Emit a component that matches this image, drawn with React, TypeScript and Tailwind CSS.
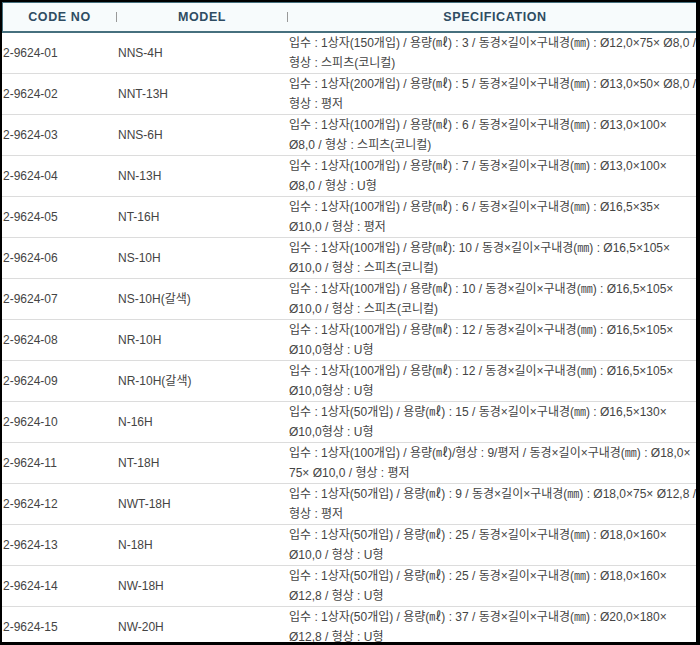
import React from "react";

const rows: [string, string, string, string][] = [
  ["2-9624-01", "NNS-4H", "입수 : 1상자(150개입) / 용량(㎖) : 3 / 동경×길이×구내경(㎜) : Ø12,0×75× Ø8,0 /", "형상 : 스피츠(코니컬)"],
  ["2-9624-02", "NNT-13H", "입수 : 1상자(200개입) / 용량(㎖) : 5 / 동경×길이×구내경(㎜) : Ø13,0×50× Ø8,0 /", "형상 : 평저"],
  ["2-9624-03", "NNS-6H", "입수 : 1상자(100개입) / 용량(㎖) : 6 / 동경×길이×구내경(㎜) : Ø13,0×100×", "Ø8,0 / 형상 : 스피츠(코니컬)"],
  ["2-9624-04", "NN-13H", "입수 : 1상자(100개입) / 용량(㎖) : 7 / 동경×길이×구내경(㎜) : Ø13,0×100×", "Ø8,0 / 형상 : U형"],
  ["2-9624-05", "NT-16H", "입수 : 1상자(100개입) / 용량(㎖) : 6 / 동경×길이×구내경(㎜) : Ø16,5×35×", "Ø10,0 / 형상 : 평저"],
  ["2-9624-06", "NS-10H", "입수 : 1상자(100개입) / 용량(㎖): 10 / 동경×길이×구내경(㎜) : Ø16,5×105×", "Ø10,0 / 형상 : 스피츠(코니컬)"],
  ["2-9624-07", "NS-10H(갈색)", "입수 : 1상자(100개입) / 용량(㎖) : 10 / 동경×길이×구내경(㎜) : Ø16,5×105×", "Ø10,0 / 형상 : 스피츠(코니컬)"],
  ["2-9624-08", "NR-10H", "입수 : 1상자(100개입) / 용량(㎖) : 12 / 동경×길이×구내경(㎜) : Ø16,5×105×", "Ø10,0형상 : U형"],
  ["2-9624-09", "NR-10H(갈색)", "입수 : 1상자(100개입) / 용량(㎖) : 12 / 동경×길이×구내경(㎜) : Ø16,5×105×", "Ø10,0형상 : U형"],
  ["2-9624-10", "N-16H", "입수 : 1상자(50개입) / 용량(㎖) : 15 / 동경×길이×구내경(㎜) : Ø16,5×130×", "Ø10,0형상 : U형"],
  ["2-9624-11", "NT-18H", "입수 : 1상자(100개입) / 용량(㎖)/형상 : 9/평저 / 동경×길이×구내경(㎜) : Ø18,0×", "75× Ø10,0 / 형상 : 평저"],
  ["2-9624-12", "NWT-18H", "입수 : 1상자(50개입) / 용량(㎖) : 9 / 동경×길이×구내경(㎜) : Ø18,0×75× Ø12,8 /", "형상 : 평저"],
  ["2-9624-13", "N-18H", "입수 : 1상자(50개입) / 용량(㎖) : 25 / 동경×길이×구내경(㎜) : Ø18,0×160×", "Ø10,0 / 형상 : U형"],
  ["2-9624-14", "NW-18H", "입수 : 1상자(50개입) / 용량(㎖) : 25 / 동경×길이×구내경(㎜) : Ø18,0×160×", "Ø12,8 / 형상 : U형"],
  ["2-9624-15", "NW-20H", "입수 : 1상자(50개입) / 용량(㎖) : 37 / 동경×길이×구내경(㎜) : Ø20,0×180×", "Ø12,8 / 형상 : U형"],
];

export default function App() {
  return (
    <div
      className="w-[700px] h-[645px] overflow-hidden bg-white border-black border-t-2 border-l-2 border-r-4 border-b-[3px] box-border"
      style={{ fontFamily: '"Liberation Sans", "Noto Sans CJK KR", sans-serif' }}
    >
      <div className="w-[720px]">
        <div className="flex h-[31px] items-center bg-[#f7fbfc] border-t border-l border-[#46707e] border-b-2 text-[12.5px] font-bold text-[#2e4c62] tracking-[0.6px]">
          <div className="w-[113px] text-center">CODE NO</div>
          <div className="w-0 h-[10px] border-l border-[#999]" />
          <div className="w-[170px] text-center">MODEL</div>
          <div className="w-0 h-[10px] border-l border-[#999]" />
          <div className="w-[414px] text-center">SPECIFICATION</div>
        </div>
        {rows.map(([code, model, l1, l2]) => (
          <div key={code} className="flex h-[41px] border-b border-[#dcdcdc] text-[12px] text-[#444]">
            <div className="w-[113px] pl-px flex items-center whitespace-nowrap">{code}</div>
            <div className="w-[172px] pl-[3px] flex items-center whitespace-nowrap">{model}</div>
            <div className="flex-1 pl-[2px] flex flex-col justify-center leading-[20px] whitespace-nowrap">
              <div>{l1}</div>
              <div>{l2}</div>
            </div>
          </div>
        ))}
      </div>
    </div>
  );
}
